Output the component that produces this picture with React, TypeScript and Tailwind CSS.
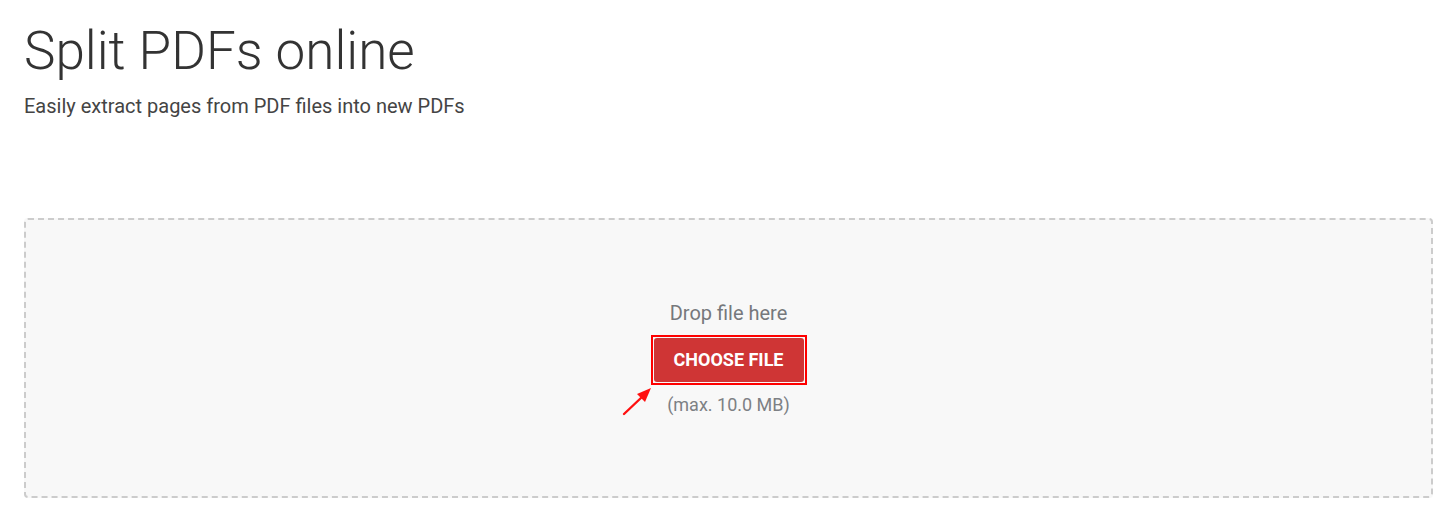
import React from 'react';

export default function App() {
    return (
        <div className="min-h-screen bg-white pl-6 pr-[23px] font-['Roboto',_'Liberation_Sans',_sans-serif]">
            {/* Header */}
            <h1 className="pt-[20px] text-[53px] font-light leading-[1.2] text-[#333333]">Split PDFs online</h1>
            <p className="mt-[7px] text-[20px] leading-[30px] text-[#444444]">Easily extract pages from PDF files into new PDFs</p>

            {/* Drop zone */}
            <div className="mt-[97px] flex h-[280px] flex-col items-center justify-center rounded-[4px] border-2 border-dashed border-[#cccccc] bg-[#f8f8f8]">
                <span className="text-[20px] leading-[30px] text-[#76787c]">Drop file here</span>
                <div className="relative mt-[7px] border-2 border-[#ff0000] p-px">
                    <button className="flex h-[44px] w-[150px] items-center justify-center rounded-[3px] bg-[#cf3535] text-[18px] font-bold uppercase text-white">
                        Choose file
                    </button>
                    <svg className="absolute left-[-31px] top-[49px] h-[30px] w-[30px]" viewBox="0 0 30 30">
                        <line x1="2" y1="28" x2="20" y2="11" stroke="#ff1010" strokeWidth="2.4" strokeLinecap="round" />
                        <polygon points="29,2 15,8 23,16" fill="#ff1010" />
                    </svg>
                </div>
                <span className="mt-[6px] text-[18px] leading-[27px] text-[#7d8084]">(max. 10.0 MB)</span>
            </div>
        </div>
    );
}
